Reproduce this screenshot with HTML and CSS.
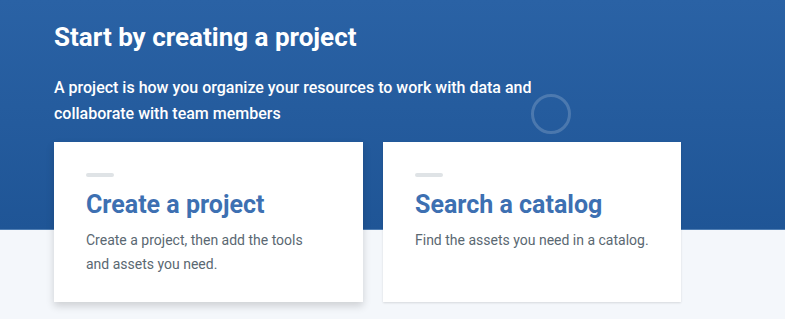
FILE: index.html
```html
<!DOCTYPE html>
<html lang="en">
<head>
  <meta charset="UTF-8">
  <title>Start by creating a project</title>
  <link rel="stylesheet" href="styles.css">
</head>
<body>
  <div class="page">
    <div class="intro">
      <h1>Start by creating a project</h1>
      <p>A project is how you organize your resources to work with data and<br>collaborate with team members</p>
      <div class="spinner"></div>
    </div>

    <div class="cards">
      <div class="card card-wide card-hover">
        <div class="dash"></div>
        <h2>Create a project</h2>
        <p>Create a project, then add the tools<br>and assets you need.</p>
      </div>
      <div class="card">
        <div class="dash"></div>
        <h2>Search a catalog</h2>
        <p>Find the assets you need in a catalog.</p>
      </div>
    </div>
  </div>
</body>
</html>
```

FILE: styles.css
```css
body { margin: 0; font-family: Roboto, "Noto Sans", sans-serif; background: #f4f7fb; }
.page {
  height: 319px;
  background: linear-gradient(to bottom, #2a62a5 0, #1f5596 229px, #4e7db3 229px, #4e7db3 230px, #f4f7fb 230px);
}
.intro { position: relative; padding: 21px 0 0 54px; height: 121px; }
.intro h1 { margin: 0; font-size: 26px; line-height: 32px; font-weight: 700; color: #fff; }
.intro p { margin: 22px 0 0; font-size: 16px; line-height: 26px; font-weight: 500; color: #fff; }
.spinner {
  position: absolute; left: 531px; top: 94px;
  width: 34px; height: 34px;
  border: 3px solid rgba(255, 255, 255, 0.18);
  border-radius: 50%;
}
.cards { display: flex; gap: 20px; padding-left: 54px; }
.card {
  width: 298px; height: 160px; box-sizing: border-box;
  padding: 31px 32px 0;
  background: #fff;
  box-shadow: 0 1px 2px rgba(0, 0, 0, 0.12);
}
.card-wide { width: 309px; }
.card-hover { box-shadow: 0 4px 8px rgba(0, 0, 0, 0.16); }
.dash { width: 28px; height: 4px; border-radius: 2px; background: #dfe3e6; }
.card h2 { margin: 13px 0 0; font-size: 25px; line-height: 30px; font-weight: 700; color: #3d70b2; }
.card p { margin: 8px 0 0; font-size: 14px; line-height: 24px; color: #5a6872; }
```
